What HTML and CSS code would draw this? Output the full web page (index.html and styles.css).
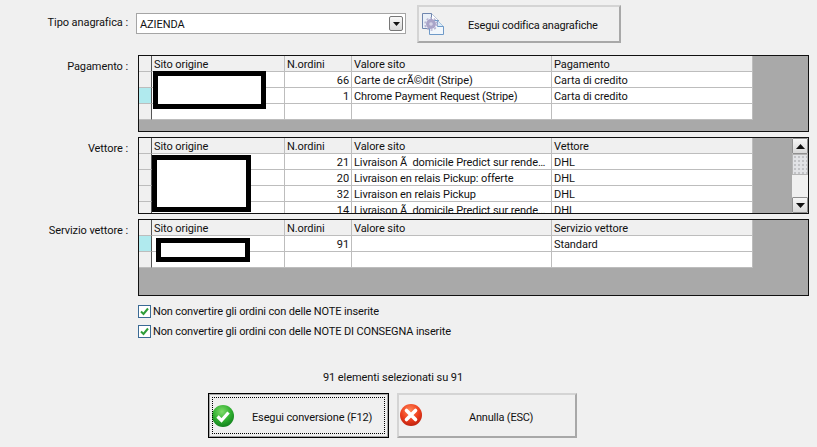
FILE: index.html
```html
<!DOCTYPE html>
<html lang="it">
<head>
<meta charset="utf-8">
<title>Conversione ordini</title>
<link rel="stylesheet" href="styles.css">
</head>
<body>
<main class="form">
  <div class="top-row">
    <div class="label top-label">Tipo anagrafica :</div>
    <div class="combo">
      <span class="combo-value">AZIENDA</span>
      <span class="combo-btn"><svg width="7" height="4" viewBox="0 0 7 4"><path d="M0 0h7L3.5 4z" fill="#111"/></svg></span>
    </div>
    <button class="btn btn-code" type="button">
      <svg class="doc-icon" width="24" height="24" viewBox="0 0 24 24">
        <path d="M1.5 2.5h9l7 7v8h-16z" fill="#e9eff7" stroke="#6f86ae"/>
        <path d="M10.5 2.5v7h7" fill="#fff" stroke="#6f86ae"/>
        <path d="M8.5 9.5h8l6 6v8h-14z" fill="#f2f7fc" stroke="#6f9ac8"/>
        <path d="M16.5 9.5v6h6" fill="#d9ebf8" stroke="#6f9ac8"/>
        <circle cx="10" cy="13" r="5" fill="#a9a4c8"/>
        <circle cx="10" cy="13" r="6" fill="none" stroke="#b8b4d2" stroke-width="1.6" stroke-dasharray="2 1.8"/>
        <circle cx="10" cy="13" r="1.8" fill="#d5d3e6"/>
      </svg>
      <span class="btn-code-text">Esegui codifica anagrafiche</span>
    </button>
  </div>

  <section class="section">
    <div class="label">Pagamento :</div>
    <div class="grid">
      <div class="table">
        <div class="row head"><span class="cell ind"></span><span class="cell">Sito origine</span><span class="cell">N.ordini</span><span class="cell">Valore sito</span><span class="cell">Pagamento</span></div>
        <div class="row"><span class="cell ind"></span><span class="cell"></span><span class="cell num">66</span><span class="cell">Carte de crÃ©dit (Stripe)</span><span class="cell">Carta di credito</span></div>
        <div class="row"><span class="cell ind sel"></span><span class="cell"></span><span class="cell num">1</span><span class="cell">Chrome Payment Request (Stripe)</span><span class="cell">Carta di credito</span></div>
        <div class="row"><span class="cell ind"></span><span class="cell"></span><span class="cell num"></span><span class="cell"></span><span class="cell"></span></div>
      </div>
      <div class="redact redact-a"></div>
    </div>
  </section>

  <section class="section">
    <div class="label">Vettore :</div>
    <div class="grid">
      <div class="table">
        <div class="row head"><span class="cell ind"></span><span class="cell">Sito origine</span><span class="cell">N.ordini</span><span class="cell">Valore sito</span><span class="cell">Vettore</span></div>
        <div class="row"><span class="cell ind"></span><span class="cell"></span><span class="cell num">21</span><span class="cell">Livraison Ã&nbsp; domicile Predict sur rende…</span><span class="cell">DHL</span></div>
        <div class="row"><span class="cell ind"></span><span class="cell"></span><span class="cell num">20</span><span class="cell">Livraison en relais Pickup: offerte</span><span class="cell">DHL</span></div>
        <div class="row"><span class="cell ind"></span><span class="cell"></span><span class="cell num">32</span><span class="cell">Livraison en relais Pickup</span><span class="cell">DHL</span></div>
        <div class="row"><span class="cell ind"></span><span class="cell"></span><span class="cell num">14</span><span class="cell">Livraison Ã&nbsp; domicile Predict sur rende…</span><span class="cell">DHL</span></div>
      </div>
      <div class="scrollbar">
        <span class="sb-btn"><svg width="9" height="5" viewBox="0 0 9 5"><path d="M4.5 0L9 5H0z" fill="#111"/></svg></span>
        <span class="sb-thumb"></span>
        <span class="sb-track"></span>
        <span class="sb-btn"><svg width="9" height="5" viewBox="0 0 9 5"><path d="M0 0h9L4.5 5z" fill="#111"/></svg></span>
      </div>
      <div class="redact redact-b"></div>
    </div>
  </section>

  <section class="section">
    <div class="label">Servizio vettore :</div>
    <div class="grid">
      <div class="table">
        <div class="row head"><span class="cell ind"></span><span class="cell">Sito origine</span><span class="cell">N.ordini</span><span class="cell">Valore sito</span><span class="cell">Servizio vettore</span></div>
        <div class="row"><span class="cell ind sel"></span><span class="cell"></span><span class="cell num">91</span><span class="cell"></span><span class="cell">Standard</span></div>
        <div class="row"><span class="cell ind"></span><span class="cell"></span><span class="cell num"></span><span class="cell"></span><span class="cell"></span></div>
      </div>
      <div class="redact redact-c"></div>
    </div>
  </section>

  <div class="checks">
    <label class="check"><span class="box"><svg width="11" height="11" viewBox="0 0 11 11"><path d="M2 5.5l2.5 2.5L9 2.5" fill="none" stroke="#2f9e3a" stroke-width="2"/></svg></span><span class="check-text">Non convertire gli ordini con delle NOTE inserite</span></label>
    <label class="check"><span class="box"><svg width="11" height="11" viewBox="0 0 11 11"><path d="M2 5.5l2.5 2.5L9 2.5" fill="none" stroke="#2f9e3a" stroke-width="2"/></svg></span><span class="check-text">Non convertire gli ordini con delle NOTE DI CONSEGNA inserite</span></label>
  </div>

  <p class="status">91 elementi selezionati su 91</p>

  <div class="actions">
    <button class="btn btn-action btn-default" type="button">
      <svg class="act-icon" width="22" height="22" viewBox="0 0 22 22">
        <defs>
          <radialGradient id="g" cx="45%" cy="30%" r="75%"><stop offset="0" stop-color="#7fdc6a"/><stop offset=".55" stop-color="#2fae2f"/><stop offset="1" stop-color="#0e7a1c"/></radialGradient>
          <radialGradient id="r" cx="45%" cy="30%" r="75%"><stop offset="0" stop-color="#ff8a5a"/><stop offset=".55" stop-color="#ee3f1e"/><stop offset="1" stop-color="#b71c0c"/></radialGradient>
        </defs>
        <circle cx="11" cy="11" r="11" fill="url(#g)"/>
        <path d="M5.5 11.5l4 4 7-8" fill="none" stroke="#fff" stroke-width="3.2"/>
      </svg>
      <span class="act-text">Esegui conversione (F12)</span>
    </button>
    <button class="btn btn-action btn-cancel" type="button">
      <svg class="act-icon" width="22" height="22" viewBox="0 0 22 22">
        <circle cx="11" cy="11" r="11" fill="url(#r)"/>
        <path d="M6.5 6.5l9 9M15.5 6.5l-9 9" fill="none" stroke="#fff" stroke-width="3.6" stroke-linecap="round"/>
      </svg>
      <span class="act-text">Annulla (ESC)</span>
    </button>
  </div>
</main>
</body>
</html>
```
FILE: styles.css
```css
* { box-sizing: border-box; }
html, body { margin: 0; height: 100%; }
body {
  background: #f0f0f0;
  color: #111;
  font: 11px/16px Roboto, sans-serif;
  letter-spacing: -0.08px;
  overflow: hidden;
}
.form { padding-top: 5px; width: 817px; height: 447px; }

.top-row { display: flex; height: 38px; margin-bottom: 12px; }
.label { width: 130px; flex: none; text-align: right; padding: 4px 2px 0 0; white-space: nowrap; }
.top-label { padding-top: 10px; }
.combo {
  width: 270px; height: 21px; margin: 8px 0 0 6px;
  display: flex; align-items: center; justify-content: space-between;
  background: #fff; border: 1px solid #a5a5a5; padding: 0 1px 0 3px;
}
.combo-value { line-height: 19px; padding-top: 2px; }
.combo-btn {
  width: 14px; height: 15px; margin-right: 1px;
  display: flex; align-items: center; justify-content: center;
  background: linear-gradient(#f8f8f8, #d8d8d8);
  border: 1px solid #777; border-radius: 2px;
}

.btn {
  font: inherit; color: inherit; letter-spacing: inherit; background: #f0f0f0; padding: 0;
  border: 2px solid; border-color: #d4d4d4 #a8a8a8 #a8a8a8 #d4d4d4;
  display: flex; align-items: center; text-align: left;
}
.btn-code { width: 204px; height: 38px; margin-left: 11px; }
.doc-icon { margin: 0 0 2px 2px; flex: none; }
.btn-code-text { margin-left: 23px; padding-top: 4px; letter-spacing: -0.2px; }

.section { display: flex; margin-bottom: 5px; }
.grid {
  position: relative; display: flex; justify-content: space-between;
  width: 671px; height: 77px; margin-left: 8px;
  background: #a9a9a9; border: 1px solid #111; overflow: hidden;
}
.table { width: 614px; flex: none; }
.row { display: grid; grid-template-columns: 13px 133px 67px 200px 201px; height: 16px; }
.cell {
  background: #fff; border-style: solid; border-color: #bdbdbd; border-width: 0 1px 1px 0;
  padding: 0 2px; line-height: 17px; white-space: nowrap; overflow: hidden;
}
.head .cell { background: #f0f0f0; }
.row .ind { background: #f0f0f0; border-right-color: #555; }
.row .ind.sel { background: #b0eaee; }
.num { text-align: right; }

.redact { position: absolute; background: #fff; border: 5px solid #000; }
.redact-a { left: 14px; top: 15px; width: 113px; height: 38px; }
.redact-b { left: 13px; top: 17px; width: 99px; height: 57px; }
.redact-c { left: 17px; top: 18px; width: 94px; height: 24px; }

.scrollbar { width: 16px; flex: none; display: flex; flex-direction: column; background: #f0f0f0; }
.sb-btn {
  height: 16px; flex: none; display: flex; align-items: center; justify-content: center;
  background: linear-gradient(#f6f6f6, #d9d9d9);
  border: 1px solid #8f8f8f; border-radius: 1px;
}
.sb-thumb {
  height: 21px; flex: none;
  background: radial-gradient(circle, #c2c3c6 0 1px, transparent 1px) 0 0 / 4px 4px, #e2e3e6;
  border: 1px solid #b5b5b5;
}
.sb-track { flex: 1; background: #f0f0f0; }

.checks { margin: 7px 0 0 138px; display: flex; flex-direction: column; gap: 4px; }
.check { display: flex; align-items: center; gap: 2px; height: 16px; white-space: nowrap; }
.check-text { letter-spacing: -0.14px; padding-top: 2px; }
.box {
  width: 13px; height: 13px; flex: none; background: #fff;
  border: 1px solid #3a6a94; display: flex; align-items: center; justify-content: center;
}

.status { margin: 31px 0 0; width: 786px; text-align: center; }

.actions { display: flex; gap: 8px; margin: 7px 0 0 208px; }
.btn-action { width: 180px; height: 45px; position: relative; }
.btn-default { width: 181px; border: 1px solid #000; outline: 1px solid #a8a8a8; outline-offset: -2px; }
.btn-default::after {
  content: ""; position: absolute; inset: 3px; border: 1px dotted #000;
}
.act-icon { flex: none; }
.btn-default .act-icon { margin-left: 3px; }
.btn-cancel .act-icon { margin: 0 0 2px 1px; }
.act-text { padding-top: 4px; }
.btn-default .act-text { margin-left: 18px; padding-top: 5px; letter-spacing: -0.14px; }
.btn-cancel .act-text { margin-left: 47px; letter-spacing: -0.2px; }
```
